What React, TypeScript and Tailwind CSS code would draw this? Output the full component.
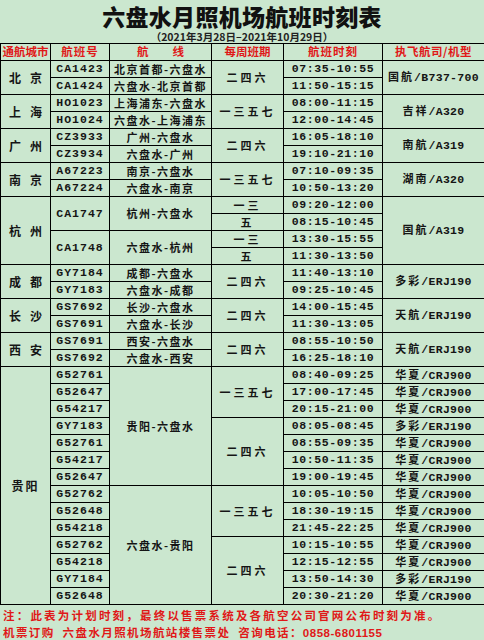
type Cell = [string, number];

type Row = {
  city?: Cell;
  no?: Cell;
  route?: Cell;
  days?: Cell;
  time: string;
  air?: Cell;
};

const HX = '华夏/CRJ900';
const DC = '多彩/ERJ190';

const rows: Row[] = [
  { city: ['北京', 2], no: ['CA1423', 1], route: ['北京首都-六盘水', 1], days: ['二四六', 2], time: '07:35-10:55', air: ['国航/B737-700', 2] },
  { no: ['CA1424', 1], route: ['六盘水-北京首都', 1], time: '11:50-15:15' },
  { city: ['上海', 2], no: ['HO1023', 1], route: ['上海浦东-六盘水', 1], days: ['一三五七', 2], time: '08:00-11:15', air: ['吉祥/A320', 2] },
  { no: ['HO1024', 1], route: ['六盘水-上海浦东', 1], time: '12:00-14:45' },
  { city: ['广州', 2], no: ['CZ3933', 1], route: ['广州-六盘水', 1], days: ['二四六', 2], time: '16:05-18:10', air: ['南航/A319', 2] },
  { no: ['CZ3934', 1], route: ['六盘水-广州', 1], time: '19:10-21:10' },
  { city: ['南京', 2], no: ['A67223', 1], route: ['南京-六盘水', 1], days: ['一三五七', 2], time: '07:10-09:35', air: ['湖南/A320', 2] },
  { no: ['A67224', 1], route: ['六盘水-南京', 1], time: '10:50-13:20' },
  { city: ['杭州', 4], no: ['CA1747', 2], route: ['杭州-六盘水', 2], days: ['一三', 1], time: '09:20-12:00', air: ['国航/A319', 4] },
  { days: ['五', 1], time: '08:15-10:45' },
  { no: ['CA1748', 2], route: ['六盘水-杭州', 2], days: ['一三', 1], time: '13:30-15:55' },
  { days: ['五', 1], time: '11:30-13:50' },
  { city: ['成都', 2], no: ['GY7184', 1], route: ['成都-六盘水', 1], days: ['二四六', 2], time: '11:40-13:10', air: ['多彩/ERJ190', 2] },
  { no: ['GY7183', 1], route: ['六盘水-成都', 1], time: '09:25-10:45' },
  { city: ['长沙', 2], no: ['GS7692', 1], route: ['长沙-六盘水', 1], days: ['二四六', 2], time: '14:00-15:45', air: ['天航/ERJ190', 2] },
  { no: ['GS7691', 1], route: ['六盘水-长沙', 1], time: '11:30-13:05' },
  { city: ['西安', 2], no: ['GS7691', 1], route: ['西安-六盘水', 1], days: ['二四六', 2], time: '08:55-10:50', air: ['天航/ERJ190', 2] },
  { no: ['GS7692', 1], route: ['六盘水-西安', 1], time: '16:25-18:10' },
  // 贵阳
  { city: ['贵阳', 14], no: ['G52761', 1], route: ['贵阳-六盘水', 7], days: ['一三五七', 3], time: '08:40-09:25', air: [HX, 1] },
  { no: ['G52647', 1], time: '17:00-17:45', air: [HX, 1] },
  { no: ['G54217', 1], time: '20:15-21:00', air: [HX, 1] },
  { no: ['GY7183', 1], days: ['二四六', 4], time: '08:05-08:45', air: [DC, 1] },
  { no: ['G52761', 1], time: '08:55-09:35', air: [HX, 1] },
  { no: ['G54217', 1], time: '10:50-11:35', air: [HX, 1] },
  { no: ['G52647', 1], time: '19:00-19:45', air: [HX, 1] },
  { no: ['G52762', 1], route: ['六盘水-贵阳', 7], days: ['一三五七', 3], time: '10:05-10:50', air: [HX, 1] },
  { no: ['G52648', 1], time: '18:30-19:15', air: [HX, 1] },
  { no: ['G54218', 1], time: '21:45-22:25', air: [HX, 1] },
  { no: ['G52762', 1], days: ['二四六', 4], time: '10:15-10:55', air: [HX, 1] },
  { no: ['G54218', 1], time: '12:15-12:55', air: [HX, 1] },
  { no: ['GY7184', 1], time: '13:50-14:30', air: [DC, 1] },
  { no: ['G52648', 1], time: '20:30-21:20', air: [HX, 1] },
];

const td = 'border border-black p-0 text-center align-middle leading-none';
const mono = "font-['Liberation_Mono','Noto_Sans_CJK_SC',monospace] font-bold text-[11.5px] tracking-[0.3px]";

function Airline({ text }: { text: string }) {
  const [co, model] = text.split('/');
  return (
    <span className="whitespace-nowrap">
      <span className="tracking-[2px]">{co}</span>
      <span className={mono}>/{model}</span>
    </span>
  );
}

export default function App() {
  return (
    <div className="w-[484px] h-[640px] overflow-hidden bg-[#cbe7cf] text-[#151515] font-['Noto_Sans_CJK_SC',sans-serif] font-bold">
      {/* Title */}
      <div className="h-[43px] flex flex-col items-center overflow-hidden">
        <div className="text-[23px] font-black leading-[23px] h-[23px] mt-[5px] tracking-[0.3px] text-[#111]">
          六盘水月照机场航班时刻表
        </div>
        <div className="text-[10.5px] leading-[11px] h-[11px] mt-[3px] text-[#222]">（2021年3月28日–2021年10月29日）</div>
      </div>

      <table className="table-fixed border-collapse w-[484px]">
        <colgroup>
          <col className="w-[50px]" />
          <col className="w-[59px]" />
          <col className="w-[102px]" />
          <col className="w-[72px]" />
          <col className="w-[99px]" />
          <col className="w-[102px]" />
        </colgroup>
        <thead>
          <tr className="h-[17px] text-[#e01818] text-[11.5px]">
            <td className={td}>通航城市</td>
            <td className={`${td} tracking-[1px]`}>航班号</td>
            <td className={td}>
              航<span className="inline-block w-[24px]" />线
            </td>
            <td className={td}>每周班期</td>
            <td className={`${td} tracking-[1px]`}>航班时刻</td>
            <td className={`${td} tracking-[0.5px]`}>执飞航司/机型</td>
          </tr>
        </thead>
        <tbody className="text-[11px]">
          {rows.map((r, i) => (
            <tr key={i} className="h-[17px]">
              {r.city && (
                <td className={`${td} text-[12px]`} rowSpan={r.city[1]}>
                  {r.city[0] === '贵阳' ? (
                    <span className="tracking-[2px]">贵阳</span>
                  ) : (
                    <div className="flex justify-between px-[8px]">
                      <span>{r.city[0][0]}</span>
                      <span>{r.city[0][1]}</span>
                    </div>
                  )}
                </td>
              )}
              {r.no && (
                <td className={`${td} ${mono} tracking-[1px]`} rowSpan={r.no[1]}>
                  {r.no[0]}
                </td>
              )}
              {r.route && (
                <td className={`${td} tracking-[1.5px] whitespace-nowrap`} rowSpan={r.route[1]}>
                  {r.route[0]}
                </td>
              )}
              {r.days && (
                <td className={`${td} tracking-[3px]`} rowSpan={r.days[1]}>
                  {r.days[0]}
                </td>
              )}
              <td className={`${td} ${mono} tracking-[0.6px]`}>{r.time}</td>
              {r.air && (
                <td className={td} rowSpan={r.air[1]}>
                  <Airline text={r.air[0]} />
                </td>
              )}
            </tr>
          ))}
        </tbody>
      </table>

      {/* Footer notes */}
      <div className="text-[#e01818] text-[11.5px] leading-[17px] pl-[3px] pt-[2px] whitespace-nowrap">
        <div className="tracking-[2.2px]">注：此表为计划时刻，最终以售票系统及各航空公司官网公布时刻为准。</div>
        <div className="tracking-[1.4px]">
          机票订购&nbsp;&nbsp;六盘水月照机场航站楼售票处&nbsp;&nbsp;咨询电话：<span className="font-['Liberation_Sans',sans-serif] tracking-[0.5px]">0858-6801155</span>
        </div>
      </div>
    </div>
  );
}
